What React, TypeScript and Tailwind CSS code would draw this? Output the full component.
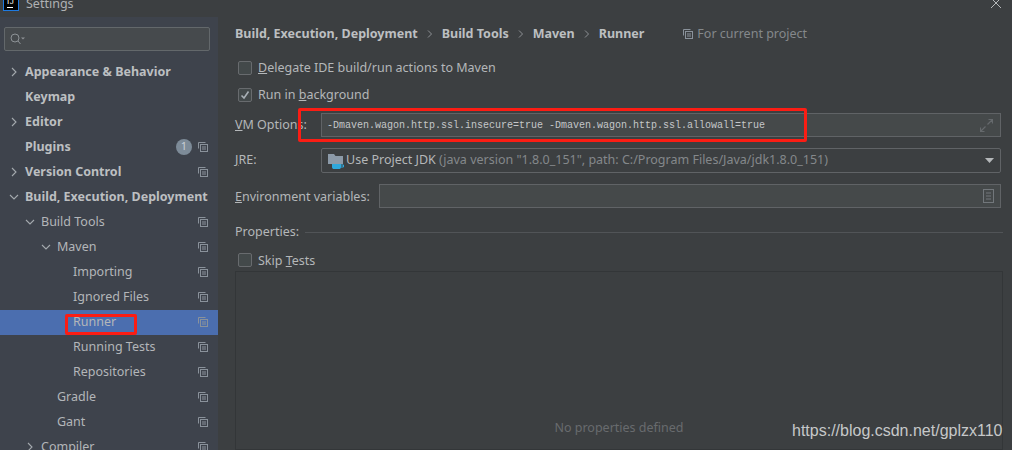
import React from "react";

const UI = { fontFamily: '"Noto Sans", "Open Sans", sans-serif' };

function CopyIcon({ className = "" }: { className?: string }) {
  return (
    <svg width="10" height="10" viewBox="0 0 10 10" fill="none" stroke="#8a929b" strokeWidth="1" className={className}>
      <path d="M0.5 6.5V0.5H7.5" />
      <rect x="2.5" y="2.5" width="7" height="7" />
      <path d="M4 5H8M4 7H8" />
    </svg>
  );
}

function Chevron({ open }: { open: boolean }) {
  return (
    <svg width="10" height="10" viewBox="0 0 10 10" fill="none" stroke="#a4a9ae" strokeWidth="1.1">
      {open ? <path d="M1 3L5 7L9 3" /> : <path d="M3 1L7 5L3 9" />}
    </svg>
  );
}

type Row = { label: string; x: number; chev?: "open" | "closed"; bold?: boolean; copy?: boolean; badge?: boolean; sel?: boolean };

const rows: Row[] = [
  { label: "Appearance & Behavior", x: 25, chev: "closed", bold: true },
  { label: "Keymap", x: 25, bold: true },
  { label: "Editor", x: 25, chev: "closed", bold: true },
  { label: "Plugins", x: 25, bold: true, copy: true, badge: true },
  { label: "Version Control", x: 25, chev: "closed", bold: true, copy: true },
  { label: "Build, Execution, Deployment", x: 25, chev: "open", bold: true },
  { label: "Build Tools", x: 41, chev: "open", copy: true },
  { label: "Maven", x: 57, chev: "open", copy: true },
  { label: "Importing", x: 73, copy: true },
  { label: "Ignored Files", x: 73, copy: true },
  { label: "Runner", x: 73, copy: true, sel: true },
  { label: "Running Tests", x: 73, copy: true },
  { label: "Repositories", x: 73, copy: true },
  { label: "Gradle", x: 57, copy: true },
  { label: "Gant", x: 57, copy: true },
  { label: "Compiler", x: 41, chev: "closed", copy: true },
];

function TreeRow({ r }: { r: Row }) {
  return (
    <div
      className={`relative flex h-[25px] shrink-0 items-center pr-[10px] text-[12.5px] ${r.sel ? "bg-[#4b6eaf]" : ""} ${
        r.bold ? "font-bold text-[#bcbfc1]" : "text-[#b3b6b9]"
      }`}
      style={{ paddingLeft: r.x }}
    >
      {r.chev && (
        <span className="absolute top-[7px]" style={{ left: r.x - 16 }}>
          <Chevron open={r.chev === "open"} />
        </span>
      )}
      <span className="flex-1 whitespace-nowrap">{r.label}</span>
      {r.badge && (
        <span className="mr-[6px] mt-[-2px] flex h-[16px] w-[16px] items-center justify-center rounded-full bg-[#7d8b98] text-[11px] font-normal text-[#c9d0d6]">1</span>
      )}
      {r.copy && <CopyIcon className="mt-[-2px]" />}
    </div>
  );
}

function Check({ checked }: { checked?: boolean }) {
  return (
    <span className="ml-[3px] mr-[6px] flex h-[14px] w-[14px] shrink-0 items-center justify-center rounded-[2px] border border-[#686b6e] bg-[#43494a]">
      {checked && (
        <svg width="10" height="10" viewBox="0 0 10 10" fill="none" stroke="#a9b0b6" strokeWidth="1.6">
          <path d="M1.5 5.5L4 8L8.5 1.5" />
        </svg>
      )}
    </span>
  );
}

function Sep() {
  return (
    <svg width="6" height="8" viewBox="0 0 6 8" fill="none" stroke="#8d9195" strokeWidth="1" className="mx-[9px]">
      <path d="M1 0.5L4.5 4L1 7.5" />
    </svg>
  );
}

export default function App() {
  return (
    <div className="relative flex h-[450px] w-[1012px] flex-col overflow-hidden bg-[#3c3f41] text-[12.5px] text-[#b4b7b9]" style={UI}>
      <header className="flex h-[17px] shrink-0 items-start">
        <div className="ml-[3px] flex h-[11px] w-[16px] shrink-0 flex-col items-start overflow-hidden border-x border-b border-[#1e7ae0] bg-black pl-[3px] text-white">
          <span className="mt-[-3px] whitespace-nowrap text-[8px] leading-[9px] tracking-[0.5px]" style={{ fontFamily: '"Liberation Sans", sans-serif' }}>IJ</span>
          <span className="mt-[1px] h-px w-[6px] bg-white" />
        </div>
        <span className="ml-[7px] mt-[-5px] leading-[18px] text-[#afb1b3]">Settings</span>
        <svg width="10" height="10" viewBox="0 0 10 10" stroke="#b5b8ba" strokeWidth="1" className="ml-auto mr-[11px] mt-[-2px]">
          <path d="M0 0L10 10M10 0L0 10" />
        </svg>
      </header>

      <div className="flex min-h-0 flex-1">
        <aside className="flex w-[218px] shrink-0 flex-col bg-[#3e434c]">
          <div className="mb-[9px] ml-[4px] mr-[8px] mt-[10px] flex h-[24px] shrink-0 items-center rounded-[2px] border border-[#63686b] bg-[#464a4d] pl-[5px]">
            <svg width="16" height="12" viewBox="0 0 16 12" fill="none" stroke="#8d9296">
              <circle cx="5" cy="5" r="4" />
              <path d="M8 8L10.5 11" />
              <path d="M11 4.5H15L13 6.5Z" fill="#8d9296" stroke="none" />
            </svg>
          </div>
          {rows.map((r) => (
            <TreeRow key={r.label} r={r} />
          ))}
        </aside>

        <main className="flex min-w-0 flex-1 flex-col pl-[17px] pr-[9px]">
          <nav className="mt-[7px] flex h-[20px] shrink-0 items-center whitespace-nowrap">
            <span className="font-bold text-[#bcbfc1]">Build, Execution, Deployment</span>
            <Sep />
            <span className="font-bold text-[#bcbfc1]">Build Tools</span>
            <Sep />
            <span className="font-bold text-[#bcbfc1]">Maven</span>
            <Sep />
            <span className="font-bold text-[#bcbfc1]">Runner</span>
            <CopyIcon className="ml-[39px] mr-[4px]" />
            <span className="text-[#84888b]">For current project</span>
          </nav>

          <label className="mt-[14px] flex h-[20px] shrink-0 items-center">
            <Check />
            <span><u>D</u>elegate IDE build/run actions to Maven</span>
          </label>
          <label className="mt-[7px] flex h-[20px] shrink-0 items-center">
            <Check checked />
            <span>Run in <u>b</u>ackground</span>
          </label>

          <div className="mr-[2px] mt-[8px] flex h-[24px] shrink-0 items-center">
            <span className="w-[86px] shrink-0"><u>V</u>M Options:</span>
            <div className="flex h-full flex-1 items-center border border-[#606366] bg-[#45494a] pl-[5px] pr-[7px]">
              <span className="flex-1 whitespace-nowrap text-[10px] text-[#c4c7c9]" style={{ fontFamily: '"Liberation Mono", monospace' }}>
                -Dmaven.wagon.http.ssl.insecure=true -Dmaven.wagon.http.ssl.allowall=true
              </span>
              <svg width="13" height="13" viewBox="0 0 13 13" fill="none" stroke="#65696c" strokeWidth="1.2">
                <path d="M7.5 5.5L12.5 0.5M8.5 0.5H12.5V4.5M5.5 7.5L0.5 12.5M0.5 8.5V12.5H4.5" />
              </svg>
            </div>
          </div>

          <div className="mr-[2px] mt-[11px] flex h-[25px] shrink-0 items-center">
            <span className="w-[86px] shrink-0"><u>J</u>RE:</span>
            <div className="flex h-full flex-1 items-center rounded-[2px] border border-[#606366] bg-[#3c3f41] pl-[6px] pr-[6px]">
              <svg width="17" height="18" viewBox="0 0 17 18" className="mr-px shrink-0">
                <path d="M0 2H6L7.5 4H15V12H0Z" fill="#8c9aa8" />
                <path d="M4 12H13V15C13 16.5 12 17 11 17H6C5 17 4 16.5 4 15Z" fill="#2fa8dc" />
                <path d="M13 13H15.5V15H13" fill="none" stroke="#2fa8dc" />
              </svg>
              <span className="flex-1 whitespace-nowrap">
                Use Project JDK <span className="text-[#84888b]">(java version "1.8.0_151", path: C:/Program Files/Java/jdk1.8.0_151)</span>
              </span>
              <svg width="9" height="5" viewBox="0 0 9 5" fill="#b5b8ba">
                <path d="M0 0H9L4.5 5Z" />
              </svg>
            </div>
          </div>

          <div className="mr-[2px] mt-[11px] flex h-[24px] shrink-0 items-center">
            <span className="mt-[2px] w-[144px] shrink-0"><u>E</u>nvironment variables:</span>
            <div className="flex h-full flex-1 items-center justify-end border border-[#606366] bg-[#45494a] pr-[6px]">
              <svg width="11" height="14" viewBox="0 0 11 14" fill="none" stroke="#72777b">
                <rect x="0.5" y="0.5" width="10" height="13" />
                <path d="M3 4H8M3 7H8M3 10H8" />
              </svg>
            </div>
          </div>

          <div className="mt-[14px] flex h-[20px] shrink-0 items-center">
            <span>Properties:</span>
            <span className="ml-[6px] h-px flex-1 bg-[#515457]" />
          </div>

          <label className="mt-[8px] flex h-[20px] shrink-0 items-center">
            <Check />
            <span className="mt-[2px]">Skip <u>T</u>ests</span>
          </label>

          <div className="mt-px min-h-0 flex-1 border border-[#333638]">
            <div className="flex h-full items-start justify-center pt-[147px] text-[#686b6e]">No properties defined</div>
          </div>
        </main>
      </div>

      <div className="pointer-events-none absolute left-[298px] top-[108px] h-[34px] w-[509px] rounded-[2px] border-[3px] border-[#fb1d14]" />
      <div className="pointer-events-none absolute left-[65px] top-[314px] h-[21px] w-[72px] rounded-[2px] border-[3px] border-[#fb1d14]" />
      <div className="absolute left-[792px] top-[421px] text-[16px] leading-[20px] text-[#c6c8c9]" style={{ fontFamily: '"Liberation Sans", sans-serif' }}>
        https://blog.csdn.net/gplzx110
      </div>
    </div>
  );
}
